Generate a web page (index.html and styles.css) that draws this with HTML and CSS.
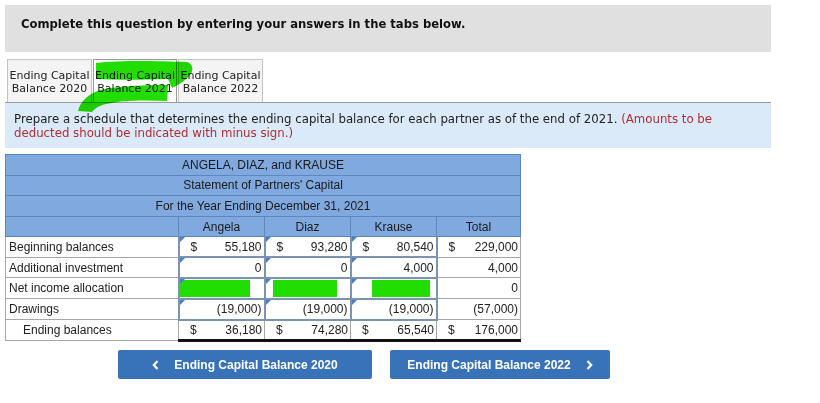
FILE: index.html
```html
<!DOCTYPE html>
<html>
<head>
<meta charset="utf-8">
<link rel="stylesheet" href="styles.css">
</head>
<body>
<div class="page">
  <div class="header">Complete this question by entering your answers in the tabs below.</div>
  <div class="tabs">
    <div class="tab">Ending Capital<br>Balance 2020</div>
    <div class="tab active">Ending Capital<br>Balance 2021</div>
    <div class="tab">Ending Capital<br>Balance 2022</div>
    <svg class="scribble" width="200" height="120" viewBox="0 0 200 120">
      <path d="M96 63 C120 60 160 61 186 62 C193 63 194 70 190 75 C186 80 180 84 172 88 L168 79 C140 80 115 80 96 79 Z" fill="#22dd00"/>
      <path d="M78 111 C80 102 88 94 100 90 C118 86 145 85 168 85 L167 101 C145 100 122 100 106 104 C98 106 94 109 92 112 Z" fill="#22dd00"/>
    </svg>
  </div>
  <div class="instructions">Prepare a schedule that determines the ending capital balance for each partner as of the end of 2021. <span class="red">(Amounts to be deducted should be indicated with minus sign.)</span></div>
  <table class="sheet">
    <colgroup>
      <col class="c-label"><col class="c-val"><col class="c-val"><col class="c-val"><col class="c-total">
    </colgroup>
    <tr class="head"><td colspan="5">ANGELA, DIAZ, and KRAUSE</td></tr>
    <tr class="head"><td colspan="5">Statement of Partners' Capital</td></tr>
    <tr class="head"><td colspan="5">For the Year Ending December 31, 2021</td></tr>
    <tr class="head cols"><td></td><td>Angela</td><td>Diaz</td><td>Krause</td><td>Total</td></tr>
    <tr class="data">
      <td class="label">Beginning balances</td>
      <td class="inp"><div class="val"><span>$</span><span>55,180</span></div></td>
      <td class="inp"><div class="val"><span>$</span><span>93,280</span></div></td>
      <td class="inp"><div class="val"><span>$</span><span>80,540</span></div></td>
      <td class="num"><div class="val"><span>$</span><span>229,000</span></div></td>
    </tr>
    <tr class="data">
      <td class="label">Additional investment</td>
      <td class="inp"><div class="val end"><span>0</span></div></td>
      <td class="inp"><div class="val end"><span>0</span></div></td>
      <td class="inp"><div class="val end"><span>4,000</span></div></td>
      <td class="num"><div class="val end"><span>4,000</span></div></td>
    </tr>
    <tr class="data">
      <td class="label">Net income allocation</td>
      <td class="inp"><div class="blot b1"></div></td>
      <td class="inp"><div class="blot b2"></div></td>
      <td class="inp"><div class="blot b3"></div></td>
      <td class="num"><div class="val end"><span>0</span></div></td>
    </tr>
    <tr class="data">
      <td class="label">Drawings</td>
      <td class="inp"><div class="val end"><span>(19,000)</span></div></td>
      <td class="inp"><div class="val end"><span>(19,000)</span></div></td>
      <td class="inp"><div class="val end"><span>(19,000)</span></div></td>
      <td class="num"><div class="val end"><span>(57,000)</span></div></td>
    </tr>
    <tr class="data final">
      <td class="label indent">Ending balances</td>
      <td class="num"><div class="val"><span>$</span><span>36,180</span></div></td>
      <td class="num"><div class="val"><span>$</span><span>74,280</span></div></td>
      <td class="num"><div class="val"><span>$</span><span>65,540</span></div></td>
      <td class="num"><div class="val"><span>$</span><span>176,000</span></div></td>
    </tr>
  </table>
  <div class="nav">
    <button class="btn prev"><svg class="chev" width="7" height="10" viewBox="0 0 7 10"><path d="M5.5 1 L1.8 5 L5.5 9" fill="none" stroke="#fff" stroke-width="2.2"/></svg>Ending Capital Balance 2020</button>
    <button class="btn next">Ending Capital Balance 2022<svg class="chev" width="7" height="10" viewBox="0 0 7 10"><path d="M1.5 1 L5.2 5 L1.5 9" fill="none" stroke="#fff" stroke-width="2.2"/></svg></button>
  </div>
</div>
</body>
</html>
```
FILE: styles.css
```css
html, body { margin: 0; padding: 0; background: #fff; }
.page { padding: 5px; width: 766px; }
.header {
  background: #e0e0e0;
  height: 47px;
  box-sizing: border-box;
  padding: 12px 0 0 16px;
  font: bold 11.6px "DejaVu Sans", Verdana, sans-serif;
  color: #111;
}
.tabs {
  position: relative;
  display: flex;
  margin-top: 7px;
  padding-left: 2px;
  height: 43px;
}
.tab {
  box-sizing: border-box;
  width: 85px;
  height: 43px;
  border: 1px solid #c4c4c4;
  border-bottom: none;
  background: #f4f4f4;
  font: 11px "DejaVu Sans", Verdana, sans-serif;
  line-height: 13px;
  color: #222;
  text-align: center;
  padding-top: 9px;
}
.tab.active { background: #fff; border-color: #999; width: 84px; }
.tab + .tab { margin-left: 1px; }
.scribble {
  position: absolute;
  left: -5px;
  top: -59px;
  mix-blend-mode: multiply;
}
.instructions {
  background: #dbeaf8;
  border-top: 1px solid #9a9a9a;
  padding: 9px 9px 7px 9px;
  height: 29px;
  font: 11.75px "DejaVu Sans", Verdana, sans-serif;
  line-height: 14px;
  color: #222;
}
.red { color: #b22d34; }
.sheet {
  margin-top: 6px;
  border-collapse: collapse;
  table-layout: fixed;
  width: 515px;
  font: 12px "Liberation Sans", Arial, sans-serif;
  color: #222;
}
.c-label { width: 173px; }
.c-val { width: 86px; }
.c-total { width: 84px; }
.sheet td { height: 20px; padding: 0; border: 1px solid #a7a7a7; }
.sheet .head td { height: 19.6px; }
.sheet .data td { height: 18.8px; }
.head td {
  background: #7fa9df;
  border: 1px solid #5e86bd;
  text-align: center;
  color: #1a1a1a;
}
.label { padding-left: 3px !important; }
.label.indent { padding-left: 17px !important; }
.inp {
  position: relative;
  border: 2px solid #7b93b0 !important;
  border-top-width: 1px !important;
}
.inp::before {
  content: "";
  position: absolute;
  left: 0; top: 0;
  border-top: 5px solid #4d7fc0;
  border-right: 5px solid transparent;
}
.val {
  display: flex;
  justify-content: space-between;
  padding: 0 2px 0 11px;
}
.val.end { justify-content: flex-end; }
.final .num { border-bottom: 3px solid #111; }
.blot { height: 17px; background: #22dd00; }
.b1 { margin: 0 14px 0 0; }
.b2 { margin: 0 13px 0 7px; }
.b3 { margin: 0 6px 0 20px; }
.nav {
  display: flex;
  gap: 18px;
  margin-top: 8px;
  margin-left: 113px;
}
.btn {
  height: 29px;
  border: none;
  border-radius: 2px;
  background: #3873b9;
  color: #fff;
  font: bold 12px "Liberation Sans", Arial, sans-serif;
  display: flex;
  align-items: center;
  justify-content: center;
  padding: 0;
}
.prev { width: 254px; }
.next { width: 220px; }
.prev .chev { margin-right: 15px; }
.next .chev { margin-left: 15px; }
```
